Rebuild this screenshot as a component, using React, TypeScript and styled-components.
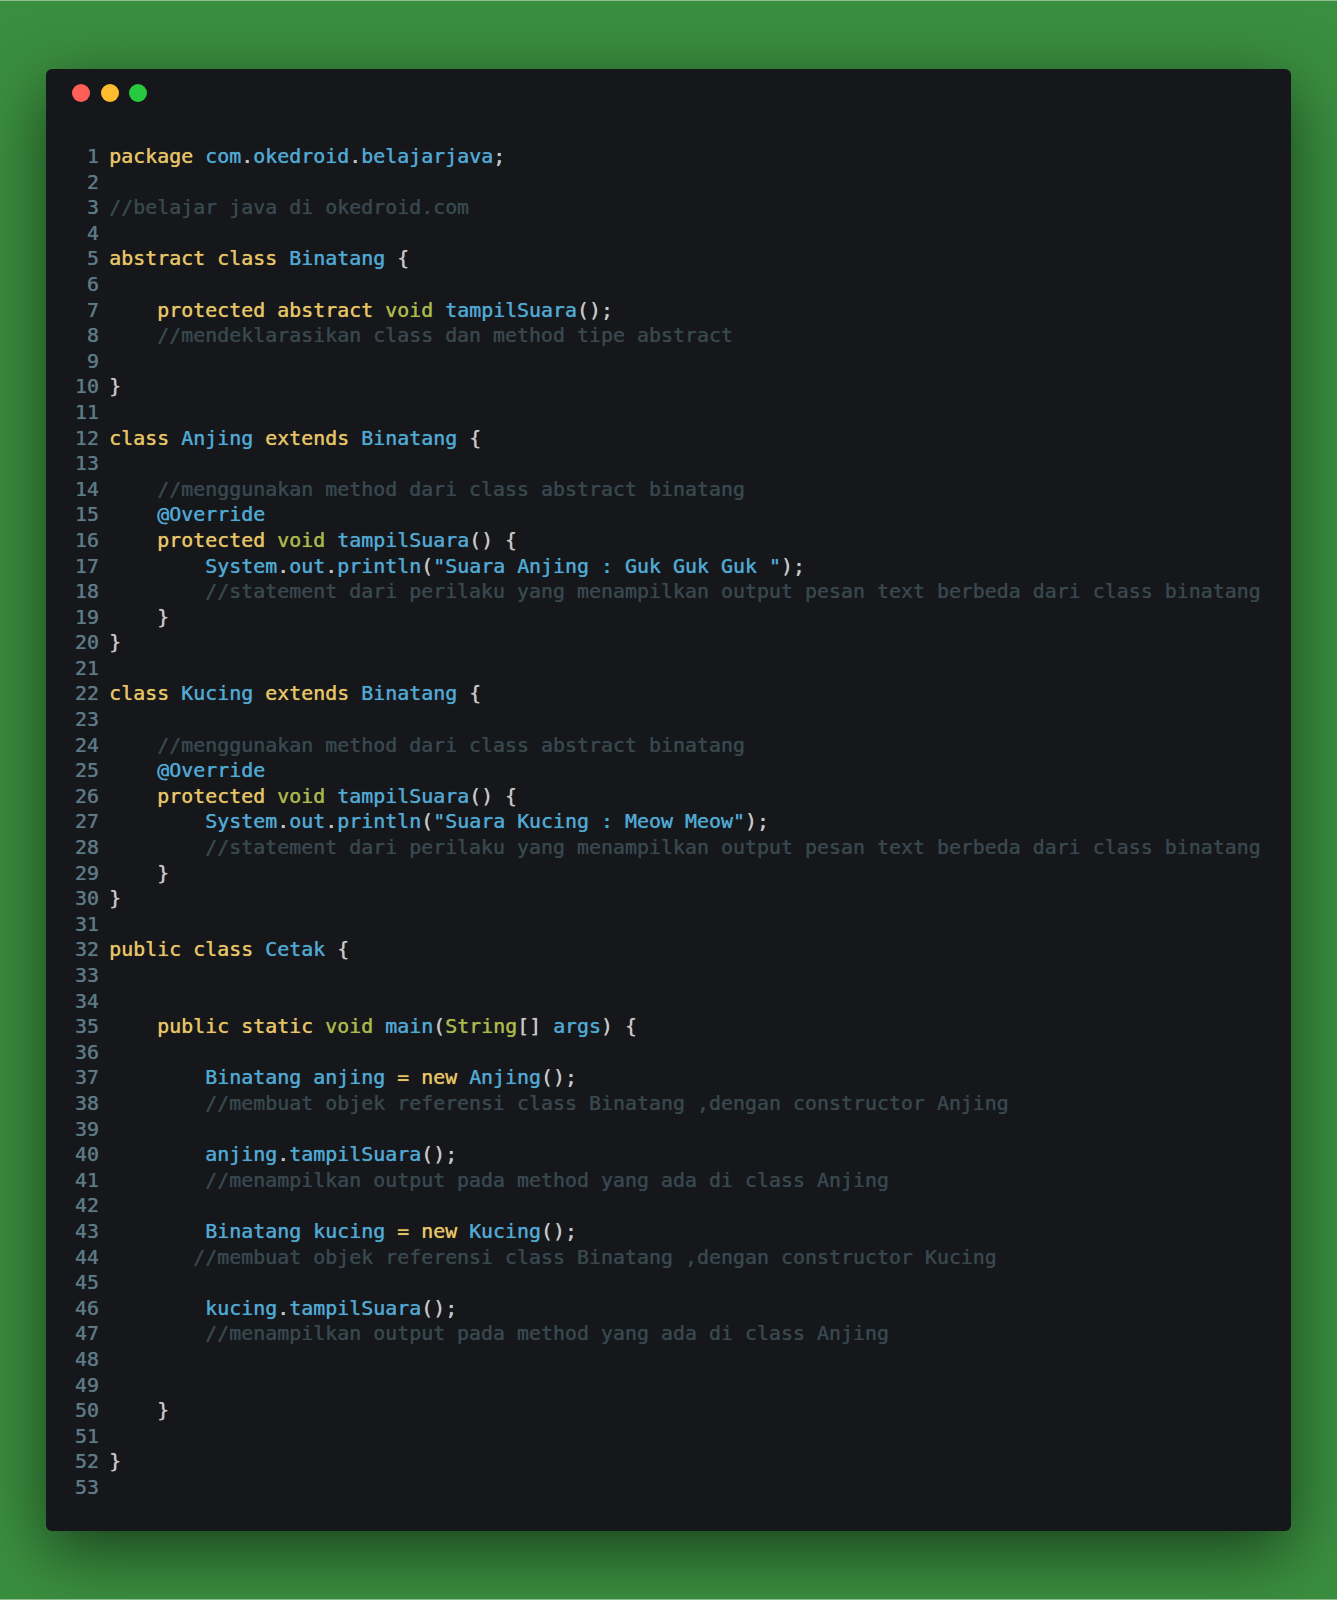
import styled, { createGlobalStyle } from 'styled-components';

const GlobalStyle = createGlobalStyle`
  html, body {
    margin: 0;
    padding: 0;
    background: #3a8e3f;
  }
`;

const Page = styled.div`
  width: 1337px;
  height: 1600px;
  box-sizing: border-box;
  padding: 68px 46px;
  background: #3a8e3f;
  border-top: 1px solid #8fbd92;
  border-bottom: 1px solid #8fbd92;
  overflow: hidden;
`;

const Window = styled.div`
  height: 1462px;
  box-sizing: border-box;
  padding: 15px 0 0 26px;
  background: #16171a;
  border-radius: 6px;
  box-shadow: 0 20px 68px rgba(0, 0, 0, 0.55);
`;

const Controls = styled.div`
  display: flex;
  gap: 10.5px;
`;

const Dot = styled.span<{ $color: string }>`
  width: 18px;
  height: 18px;
  border-radius: 50%;
  background: ${(p) => p.$color};
`;

const Code = styled.div`
  margin-top: 42px;
  font-family: 'DejaVu Sans Mono', monospace;
  font-size: 19.93px;
  line-height: 25.6px;
  white-space: pre;
  text-shadow: 0 0 0.7px currentColor;
`;

const Row = styled.div`
  display: flex;
  height: 25.6px;
`;

const LineNo = styled.span`
  width: 27px;
  margin-right: 10.3px;
  text-align: right;
  color: #5c7a85;
`;

const colors: Record<string, string> = {
  k: '#e5c566',
  b: '#4fa9d2',
  g: '#a9b94d',
  p: '#c6c8c5',
  c: '#37484f',
};

const Tok = styled.span<{ $t: string }>`
  color: ${(p) => colors[p.$t]};
`;

type Token = [string, string];

const overrideBlock = (name: string, message: string): Token[][] => [
  [['k', 'class '], ['b', name], ['k', ' extends '], ['b', 'Binatang'], ['p', ' {']],
  [],
  [['c', '    //menggunakan method dari class abstract binatang']],
  [['b', '    @Override']],
  [['k', '    protected '], ['g', 'void '], ['b', 'tampilSuara'], ['p', '() {']],
  [['b', '        System'], ['p', '.'], ['b', 'out'], ['p', '.'], ['b', 'println'], ['p', '('], ['b', message], ['p', ');']],
  [['c', '        //statement dari perilaku yang menampilkan output pesan text berbeda dari class binatang']],
  [['p', '    }']],
  [['p', '}']],
  [],
];

const lines: Token[][] = [
  [['k', 'package '], ['b', 'com'], ['p', '.'], ['b', 'okedroid'], ['p', '.'], ['b', 'belajarjava'], ['p', ';']],
  [],
  [['c', '//belajar java di okedroid.com']],
  [],
  [['k', 'abstract class '], ['b', 'Binatang'], ['p', ' {']],
  [],
  [['k', '    protected abstract '], ['g', 'void '], ['b', 'tampilSuara'], ['p', '();']],
  [['c', '    //mendeklarasikan class dan method tipe abstract']],
  [],
  [['p', '}']],
  [],
  ...overrideBlock('Anjing', '"Suara Anjing : Guk Guk Guk "'),
  ...overrideBlock('Kucing', '"Suara Kucing : Meow Meow"'),
  [['k', 'public class '], ['b', 'Cetak'], ['p', ' {']],
  [],
  [],
  [['k', '    public static '], ['g', 'void '], ['b', 'main'], ['p', '('], ['g', 'String'], ['p', '[] '], ['b', 'args'], ['p', ') {']],
  [],
  [['b', '        Binatang anjing '], ['k', '= new '], ['b', 'Anjing'], ['p', '();']],
  [['c', '        //membuat objek referensi class Binatang ,dengan constructor Anjing']],
  [],
  [['b', '        anjing'], ['p', '.'], ['b', 'tampilSuara'], ['p', '();']],
  [['c', '        //menampilkan output pada method yang ada di class Anjing']],
  [],
  [['b', '        Binatang kucing '], ['k', '= new '], ['b', 'Kucing'], ['p', '();']],
  [['c', '       //membuat objek referensi class Binatang ,dengan constructor Kucing']],
  [],
  [['b', '        kucing'], ['p', '.'], ['b', 'tampilSuara'], ['p', '();']],
  [['c', '        //menampilkan output pada method yang ada di class Anjing']],
  [],
  [],
  [['p', '    }']],
  [],
  [['p', '}']],
  [],
];

export default function App() {
  return (
    <Page>
      <GlobalStyle />
      <Window>
        <Controls>
          <Dot $color="#ff5f56" />
          <Dot $color="#ffbd2e" />
          <Dot $color="#27c93f" />
        </Controls>
        <Code>
          {lines.map((tokens, i) => (
            <Row key={i}>
              <LineNo>{i + 1}</LineNo>
              <span>
                {tokens.map(([t, text], j) => (
                  <Tok key={j} $t={t}>
                    {text}
                  </Tok>
                ))}
              </span>
            </Row>
          ))}
        </Code>
      </Window>
    </Page>
  );
}
